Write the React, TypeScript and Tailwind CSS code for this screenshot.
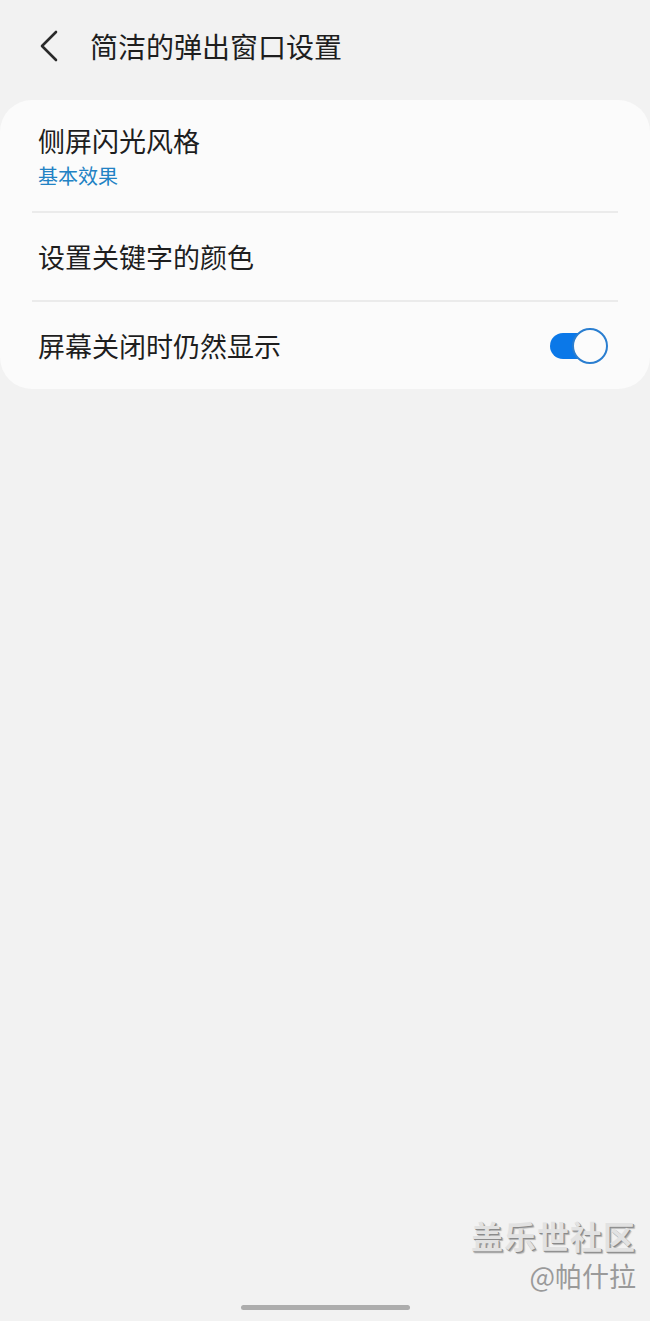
import React from "react";

const font = { fontFamily: '"Noto Sans CJK SC", "Noto Sans", sans-serif' };

function Toggle({ on }: { on: boolean }) {
  return (
    <div className="relative h-[36px] w-[58px] flex items-center">
      <div className={`h-[26px] w-[50px] rounded-full ${on ? "bg-[#0b78e8]" : "bg-[#c9c9c9]"}`} />
      <div className="absolute right-0 top-0 h-[36px] w-[36px] rounded-full border-[2px] border-[#2a7ed0] bg-[#fcfcfc]" />
    </div>
  );
}

export default function App() {
  return (
    <div className="flex h-[1321px] w-[650px] flex-col bg-[#f2f2f2] text-[#1e1e1e]" style={font}>
      {/* header */}
      <div className="flex h-[100px] items-center pb-[9px]">
        <svg width="60" height="40" viewBox="0 0 60 40" className="ml-[26px]">
          <path d="M 30 6 L 16 20 L 30 34" fill="none" stroke="#2a2a2a" strokeWidth="2.6" strokeLinecap="round" strokeLinejoin="round" />
        </svg>
        <div className="ml-[4px] text-[28px] leading-none">简洁的弹出窗口设置</div>
      </div>

      {/* card */}
      <div className="rounded-[32px] bg-[#fbfbfb]">
        <div className="flex h-[111px] flex-col justify-center gap-[3px] px-[38px] pt-[2px]">
          <div className="text-[27px] leading-[36px]">侧屏闪光风格</div>
          <div className="text-[20px] leading-[28px] text-[#2282c4]">基本效果</div>
        </div>
        <div className="mx-[32px] h-[2px] bg-[#ebebeb]" />
        <div className="flex h-[87px] items-center px-[38px]">
          <div className="text-[27px] leading-[36px]">设置关键字的颜色</div>
        </div>
        <div className="mx-[32px] h-[2px] bg-[#ebebeb]" />
        <div className="flex h-[87px] items-center justify-between pl-[38px] pr-[42px]">
          <div className="text-[27px] leading-[36px]">屏幕关闭时仍然显示</div>
          <Toggle on />
        </div>
      </div>

      <div className="flex-1" />

      {/* watermark */}
      <div className="flex flex-col items-end pr-[14px]">
        <div
          className="text-[32px] leading-[40px] font-bold tracking-[1px] text-[#e2e2e2]"
          style={{ textShadow: "1px 1px 0 #8a8a8a, 2px 2px 1px #b0b0b0" }}
        >
          盖乐世社区
        </div>
        <div className="mt-[4px] text-[27px] leading-[34px] text-[#9a9a9a]">@帕什拉</div>
      </div>

      {/* home indicator */}
      <div className="flex h-[28px] items-center justify-center">
        <div className="h-[5px] w-[169px] rounded-full bg-[#adadad]" />
      </div>
    </div>
  );
}
